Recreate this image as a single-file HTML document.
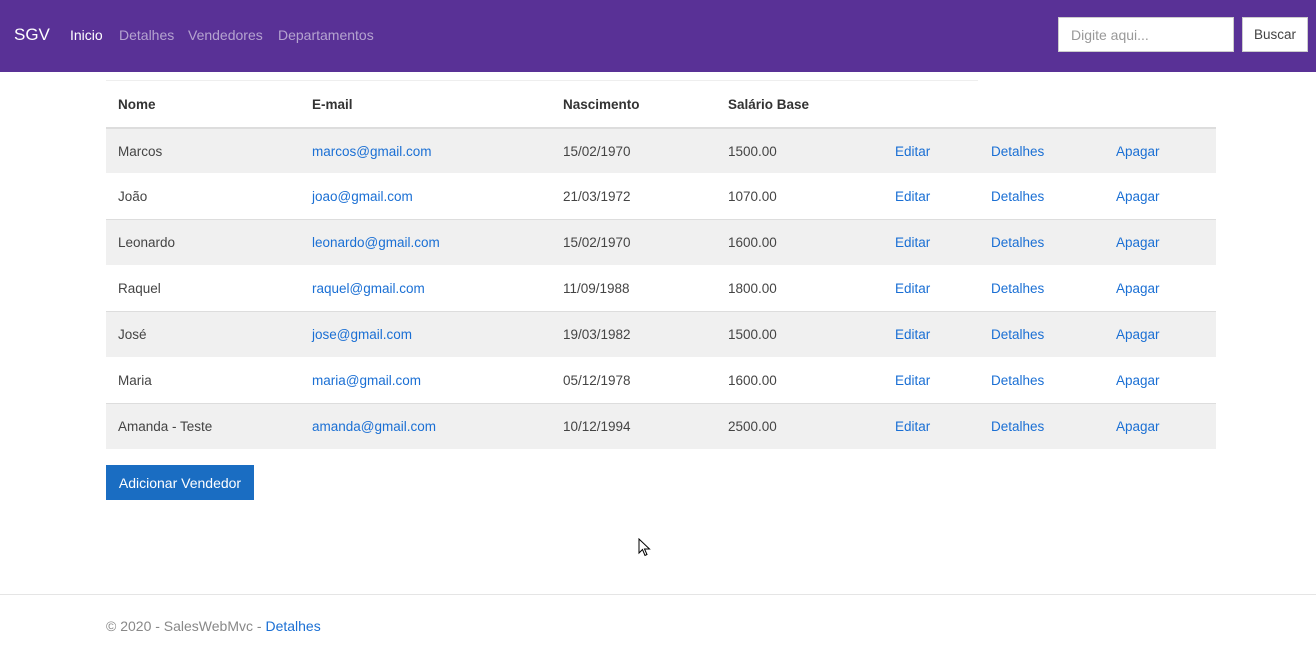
<!DOCTYPE html>
<html><head><meta charset="utf-8"><style>
*{margin:0;padding:0;box-sizing:border-box}
body{width:1316px;height:653px;overflow:hidden;background:#fff;font-family:"Liberation Sans",sans-serif;font-size:13.5px;color:#444;position:relative}
.nav{position:absolute;left:0;top:0;width:1316px;height:72px;background:#593196}
.nav span{position:absolute;top:27px;font-size:14px;color:rgba(255,255,255,.55)}
.brand{left:14px!important;top:25px!important;font-size:17px!important;color:#fff!important}
.inp{position:absolute;left:1058px;top:17px;width:176px;height:35px;background:#fff;border:1px solid #ccc;color:#999;font-size:14px;padding:9px 12px}
.btn{position:absolute;left:1242px;top:17px;width:66px;height:35px;background:#fff;border:1px solid #ccc;color:#444;font-size:13.5px;padding:9px 0;text-align:center}
.top{position:absolute;left:106px;top:80px;width:872px;height:1px;background:#eee}
.row{position:absolute;left:106px;width:1110px;height:46px}
.row div{position:absolute;top:16px;white-space:nowrap}
.g{background:#f0f0f0;border-top:1px solid #ddd}
.g div{top:15px}
.h div{font-weight:bold;color:#333}
a{color:#1a6fd4;text-decoration:none}
.add{position:absolute;left:106px;top:465px;width:148px;height:35px;background:#1a6dc2;color:#fff;font-size:14px;text-align:center;padding-top:10px}
.foot{position:absolute;left:0;top:594px;width:1316px;height:1px;background:#e5e5e5}
.ft{position:absolute;left:106px;top:618px;color:#888;font-size:14px}
</style></head><body>
<div class="nav">
<span class="brand">SGV</span>
<span style="left:70px;color:#fff">Inicio</span>
<span style="left:119px">Detalhes</span>
<span style="left:188px">Vendedores</span>
<span style="left:278px">Departamentos</span>
<div class="inp">Digite aqui...</div>
<div class="btn">Buscar</div>
</div>
<div class="top"></div>
<div class="row h" style="top:81px"><div style="left:12px">Nome</div><div style="left:206px">E-mail</div><div style="left:457px">Nascimento</div><div style="left:622px">Salário Base</div></div>
<div class="row g" style="top:127px;border-top:2px solid #ddd"><div style="left:12px">Marcos</div><div style="left:206px"><a>marcos@gmail.com</a></div><div style="left:457px">15/02/1970</div><div style="left:622px">1500.00</div><div style="left:789px"><a>Editar</a></div><div style="left:885px"><a>Detalhes</a></div><div style="left:1010px"><a>Apagar</a></div></div>
<div class="row" style="top:173px"><div style="left:12px">João</div><div style="left:206px"><a>joao@gmail.com</a></div><div style="left:457px">21/03/1972</div><div style="left:622px">1070.00</div><div style="left:789px"><a>Editar</a></div><div style="left:885px"><a>Detalhes</a></div><div style="left:1010px"><a>Apagar</a></div></div>
<div class="row g" style="top:219px"><div style="left:12px">Leonardo</div><div style="left:206px"><a>leonardo@gmail.com</a></div><div style="left:457px">15/02/1970</div><div style="left:622px">1600.00</div><div style="left:789px"><a>Editar</a></div><div style="left:885px"><a>Detalhes</a></div><div style="left:1010px"><a>Apagar</a></div></div>
<div class="row" style="top:265px"><div style="left:12px">Raquel</div><div style="left:206px"><a>raquel@gmail.com</a></div><div style="left:457px">11/09/1988</div><div style="left:622px">1800.00</div><div style="left:789px"><a>Editar</a></div><div style="left:885px"><a>Detalhes</a></div><div style="left:1010px"><a>Apagar</a></div></div>
<div class="row g" style="top:311px"><div style="left:12px">José</div><div style="left:206px"><a>jose@gmail.com</a></div><div style="left:457px">19/03/1982</div><div style="left:622px">1500.00</div><div style="left:789px"><a>Editar</a></div><div style="left:885px"><a>Detalhes</a></div><div style="left:1010px"><a>Apagar</a></div></div>
<div class="row" style="top:357px"><div style="left:12px">Maria</div><div style="left:206px"><a>maria@gmail.com</a></div><div style="left:457px">05/12/1978</div><div style="left:622px">1600.00</div><div style="left:789px"><a>Editar</a></div><div style="left:885px"><a>Detalhes</a></div><div style="left:1010px"><a>Apagar</a></div></div>
<div class="row g" style="top:403px"><div style="left:12px">Amanda - Teste</div><div style="left:206px"><a>amanda@gmail.com</a></div><div style="left:457px">10/12/1994</div><div style="left:622px">2500.00</div><div style="left:789px"><a>Editar</a></div><div style="left:885px"><a>Detalhes</a></div><div style="left:1010px"><a>Apagar</a></div></div>
<div class="add">Adicionar Vendedor</div>
<svg style="position:absolute;left:638px;top:538px" width="14" height="20" viewBox="0 0 14 20"><path d="M1 1 L1 15 L4.5 11.5 L7 17.5 L9 16.5 L6.5 11 L11.5 11 Z" fill="#fff" stroke="#000" stroke-width="1"/></svg>
<div class="foot"></div>
<div class="ft">© 2020 - SalesWebMvc - <a>Detalhes</a></div>
</body></html>
